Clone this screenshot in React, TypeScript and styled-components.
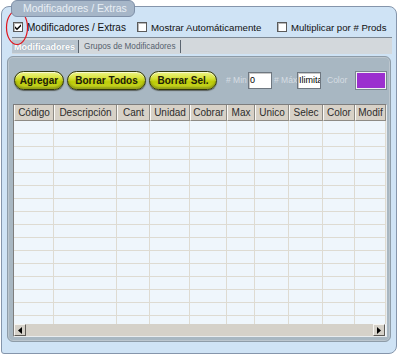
import React from "react";
import styled, { createGlobalStyle } from "styled-components";

const Global = createGlobalStyle`
  html, body { margin: 0; padding: 0; background: #ffffff; }
  body { font-family: "Liberation Sans", Arial, sans-serif; }
  * { box-sizing: border-box; }
`;

const Page = styled.div`
  position: relative;
  width: 400px;
  height: 357px;
  padding: 0 3px 0 1px;
  overflow: hidden;
`;

const Legend = styled.div`
  position: relative;
  z-index: 1;
  margin-left: 10px;
  width: 124px;
  height: 17px;
  border: 1px solid #7f90a8;
  border-radius: 6px;
  background: #a6b6c8;
  color: #e8eef4;
  font-size: 10.5px;
  line-height: 15px;
  padding-left: 11px;
  white-space: nowrap;
`;

const Frame = styled.div`
  margin-top: -11px;
  height: 348px;
  border: 1px solid #8595ab;
  border-radius: 8px 8px 8px 3px;
  background: #cfe3f5;
  padding: 12px 5px 0 5px;
  display: flex;
  flex-direction: column;
`;

const CheckRow = styled.div`
  display: flex;
  align-items: center;
  height: 16px;
  padding-left: 6px;
`;

const CheckItem = styled.label<{ $w?: number; $fs: number }>`
  display: flex;
  align-items: center;
  gap: 4px;
  flex: none;
  width: ${(p) => (p.$w ? `${p.$w}px` : "auto")};
  font-size: ${(p) => p.$fs}px;
  color: #111;
  white-space: nowrap;
`;

const Box = styled.span`
  display: inline-flex;
  align-items: center;
  justify-content: center;
  width: 10px;
  height: 10px;
  background: #ffffff;
  border: 1px solid #5a5a5a;
  box-shadow: inset 1px 1px 0 #b8b8b8;
  flex: none;
`;

const TabStrip = styled.div`
  display: flex;
  align-items: stretch;
  margin: 2px -1px 0 5px;
  height: 17px;
  background: #d3d8dc;
  border-top: 1px solid #7c8894;
`;

const Tab = styled.div<{ $active?: boolean }>`
  display: flex;
  align-items: center;
  padding: ${(p) => (p.$active ? "0 3px 0 2px" : "0 4px 0 5px")};
  margin: 2px 0 1px;
  background: ${(p) => (p.$active ? "#b9c5cf" : "transparent")};
  color: ${(p) => (p.$active ? "#ffffff" : "#56616c")};
  font-weight: ${(p) => (p.$active ? 700 : 400)};
  font-size: ${(p) => (p.$active ? "9px" : "8.2px")};
  text-shadow: ${(p) => (p.$active ? "0 0 1px #8595a3" : "none")};
  border-right: 1px solid #5b6570;
  white-space: nowrap;
`;

const Panel = styled.div`
  margin-top: 2px;
  height: 286px;
  background: #a8b7c2;
  border: 1px solid #8e9ca8;
  box-shadow: inset 0 0 0 1px #bcc6ce;
  border-radius: 6px;
  padding: 13px 3px 0 5px;
  display: flex;
  flex-direction: column;
`;

const Toolbar = styled.div`
  display: flex;
  align-items: center;
  height: 20px;
  padding-left: 1px;
`;

const PillButton = styled.button<{ $w: number }>`
  flex: none;
  width: ${(p) => p.$w}px;
  height: 19px;
  margin-right: 3px;
  padding: 0;
  border: 1px solid #343a0a;
  border-radius: 10px;
  background: linear-gradient(#eef48a 0%, #d6e236 38%, #bccb06 58%, #cbd82c 100%);
  box-shadow: inset 0 1px 0 rgba(255, 255, 255, 0.6), inset 0 -2px 2px rgba(80, 90, 0, 0.45), 0 1px 1px rgba(30, 30, 15, 0.55);
  font-family: "Liberation Sans", Arial, sans-serif;
  font-weight: 700;
  font-size: 10px;
  color: #1c2008;
  white-space: nowrap;
`;

const FieldLabel = styled.span<{ $ml: number; $w: number }>`
  flex: none;
  margin-left: ${(p) => p.$ml}px;
  width: ${(p) => p.$w}px;
  font-size: 8.5px;
  color: #d6dde3;
  white-space: nowrap;
`;

const NumInput = styled.div<{ $ml: number }>`
  flex: none;
  margin-left: ${(p) => p.$ml}px;
  width: 24px;
  height: 17px;
  background: #ffffff;
  border: 1px solid #6e7780;
  box-shadow: inset 1px 1px 0 #c8c8c8;
  font-size: 9px;
  line-height: 15px;
  padding-left: 1px;
  color: #000;
  overflow: hidden;
  white-space: nowrap;
`;

const Swatch = styled.div<{ $color: string }>`
  flex: none;
  margin-left: 9px;
  width: 30px;
  height: 17px;
  background: ${(p) => p.$color};
  border: 1px solid #eef0f2;
  outline: 1px solid #7a8590;
`;

const Table = styled.div`
  margin-top: 14px;
  height: 233px;
  width: 374px;
  border-top: 1px solid #7d7d7d;
  border-left: 1px solid #7d7d7d;
  border-right: 1px solid #e8ecef;
  border-bottom: 1px solid #e8ecef;
  background: #eff6fc;
  display: flex;
  flex-direction: column;
  overflow: hidden;
`;

const cols = "40px 63px 33px 40px 37px 28px 34px 34px 32px 31px 1fr";

const HeaderRow = styled.div`
  display: grid;
  grid-template-columns: ${cols};
  height: 16px;
  flex: none;
`;

const HeadCell = styled.div`
  display: flex;
  align-items: center;
  justify-content: center;
  background: #d7d1c7;
  border-left: 1px solid #fbfaf7;
  border-right: 1px solid #8e8b85;
  border-bottom: 1px solid #8e8b85;
  font-size: 10px;
  color: #2c2c2c;
  white-space: nowrap;
  overflow: hidden;
`;

const HeadFill = styled.div`
  background: #a8b7c2;
`;

const Body = styled.div`
  flex: 1;
  overflow: hidden;
`;

const BodyRow = styled.div`
  display: grid;
  grid-template-columns: ${cols};
  height: 13px;
`;

const BodyCell = styled.div`
  border-right: 1px solid #dedbd2;
  border-bottom: 1px solid #dedbd2;
`;

const HScroll = styled.div`
  flex: none;
  height: 12px;
  display: flex;
  justify-content: space-between;
  background: #d5d1c9;
  margin-right: 1px;
`;

const ArrowBtn = styled.div`
  width: 12px;
  height: 12px;
  display: flex;
  align-items: center;
  justify-content: center;
  background: #d5d1c9;
  border-top: 1px solid #f6f5f2;
  border-left: 1px solid #f6f5f2;
  border-right: 1px solid #5e5b56;
  border-bottom: 1px solid #5e5b56;
`;

const Annotation = styled.svg`
  position: absolute;
  left: 5px;
  top: 9px;
  pointer-events: none;
`;

const headers = ["Código", "Descripción", "Cant", "Unidad", "Cobrar", "Max", "Unico", "Selec", "Color", "Modif"];

function Check({ checked }: { checked?: boolean }) {
  return (
    <Box>
      {checked && (
        <svg width="8" height="8" viewBox="0 0 8 8">
          <path d="M1 3.3 L3 5.3 L7 1.3 L7 3.3 L3 7.2 L1 5.2 Z" fill="#000" />
        </svg>
      )}
    </Box>
  );
}

export default function App() {
  return (
    <>
      <Global />
      <Page>
        <Legend>Modificadores / Extras</Legend>
        <Frame>
          <CheckRow>
            <CheckItem $w={124} $fs={10}>
              <Check checked />
              Modificadores / Extras
            </CheckItem>
            <CheckItem $w={140} $fs={9.7}>
              <Check />
              Mostrar Automáticamente
            </CheckItem>
            <CheckItem $fs={9.6}>
              <Check />
              Multiplicar por # Prods
            </CheckItem>
          </CheckRow>
          <TabStrip>
            <Tab $active>Modificadores</Tab>
            <Tab>Grupos de Modificadores</Tab>
          </TabStrip>
          <Panel>
            <Toolbar>
              <PillButton $w={50}>Agregar</PillButton>
              <PillButton $w={79}>Borrar Todos</PillButton>
              <PillButton $w={68}>Borrar Sel.</PillButton>
              <FieldLabel $ml={6} $w={22}># Min</FieldLabel>
              <NumInput $ml={0}>0</NumInput>
              <FieldLabel $ml={2} $w={22}># Máx</FieldLabel>
              <NumInput $ml={1}>Ilimitado</NumInput>
              <FieldLabel $ml={6} $w={20}>Color</FieldLabel>
              <Swatch $color="#9b2fcf" />
            </Toolbar>
            <Table>
              <HeaderRow>
                {headers.map((h) => (
                  <HeadCell key={h}>{h}</HeadCell>
                ))}
                <HeadFill />
              </HeaderRow>
              <Body>
                {Array.from({ length: 16 }).map((_, r) => (
                  <BodyRow key={r}>
                    {headers.map((h) => (
                      <BodyCell key={h} />
                    ))}
                  </BodyRow>
                ))}
              </Body>
              <HScroll>
                <ArrowBtn>
                  <svg width="4" height="7" viewBox="0 0 4 7">
                    <path d="M4 0 L0 3.5 L4 7 Z" fill="#000" />
                  </svg>
                </ArrowBtn>
                <ArrowBtn>
                  <svg width="4" height="7" viewBox="0 0 4 7">
                    <path d="M0 0 L4 3.5 L0 7 Z" fill="#000" />
                  </svg>
                </ArrowBtn>
              </HScroll>
            </Table>
          </Panel>
        </Frame>
        <Annotation width="26" height="40" viewBox="0 0 26 40">
          <ellipse cx="12" cy="18.5" rx="10.5" ry="17" fill="none" stroke="#e0141c" strokeWidth="1.2" />
        </Annotation>
      </Page>
    </>
  );
}
